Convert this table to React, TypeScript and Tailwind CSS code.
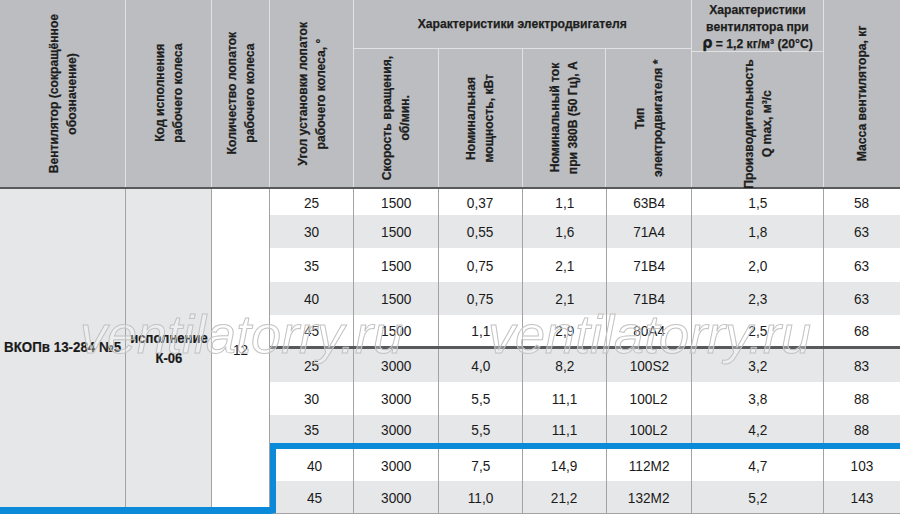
import React from "react";

const FONT = "font-['Liberation_Sans',Arial,sans-serif]";

type Row = (string | number)[];

const group1: Row[] = [
  [25, 1500, "0,37", "1,1", "63B4", "1,5", 58],
  [30, 1500, "0,55", "1,6", "71A4", "1,8", 63],
  [35, 1500, "0,75", "2,1", "71B4", "2,0", 63],
  [40, 1500, "0,75", "2,1", "71B4", "2,3", 63],
  [45, 1500, "1,1", "2,9", "80A4", "2,5", 68],
];
const group2: Row[] = [
  [25, 3000, "4,0", "8,2", "100S2", "3,2", 83],
  [30, 3000, "5,5", "11,1", "100L2", "3,8", 88],
  [35, 3000, "5,5", "11,1", "100L2", "4,2", 88],
];
const group3: Row[] = [
  [40, 3000, "7,5", "14,9", "112M2", "4,7", 103],
  [45, 3000, "11,0", "21,2", "132M2", "5,2", 143],
];

const WIDTHS = ["w-[84px]", "w-[85px]", "w-[84px]", "w-[84px]", "w-[85px]", "w-[132px]", "w-[76px]"];
const WIDTHS_HL = ["w-[78px]", "w-[85px]", "w-[84px]", "w-[84px]", "w-[85px]", "w-[132px]", "w-[76px]"];

function DataRow({ row, h, gray, hl }: { row: Row; h: string; gray: boolean; hl?: boolean }) {
  const widths = hl ? WIDTHS_HL : WIDTHS;
  return (
    <div className={`flex ${h} ${gray ? "bg-[#e6e7e8]" : "bg-white"}`}>
      {row.map((v, i) => (
        <div
          key={i}
          className={`${widths[i]} flex items-center justify-center pt-[1px] text-[15.5px] text-[#1a1a1a] ${
            i < row.length - 1 ? "border-r border-[#a3a3a3]" : ""
          }`}
        >
          <span className="inline-block whitespace-nowrap scale-x-[0.88]">{v}</span>
        </div>
      ))}
    </div>
  );
}

function VText({ children }: { children: React.ReactNode }) {
  return (
    <div className="[writing-mode:vertical-rl] rotate-180 scale-y-[0.9] text-center text-[13.5px] font-bold leading-[18px] text-[#1d1d1d] whitespace-nowrap [-webkit-text-stroke:0.25px_#1d1d1d]">
      {children}
    </div>
  );
}

function HCol({ w, children, last }: { w: string; children: React.ReactNode; last?: boolean }) {
  return (
    <div className={`${w} h-full flex items-center justify-center ${last ? "" : "border-r border-[#e2e2e2]"}`}>
      <VText>{children}</VText>
    </div>
  );
}

export default function App() {
  return (
    <div className={`relative w-[900px] h-[514px] overflow-hidden bg-white ${FONT}`}>
      {/* Header */}
      <div className="flex h-[189px] bg-[#bcbdc0] border-b-2 border-[#58595b]">
        <HCol w="w-[126px]">
          Вентилятор (сокращённое
          <br />
          обозначение)
        </HCol>
        <HCol w="w-[86px]">
          Код исполнения
          <br />
          рабочего колеса
        </HCol>
        <HCol w="w-[58px]">
          Количество лопаток
          <br />
          рабочего колеса
        </HCol>
        <HCol w="w-[84px]">
          Угол установки лопаток
          <br />
          рабочего колеса, °
        </HCol>
        <div className="w-[338px] h-full flex flex-col border-r border-[#e2e2e2]">
          <div className="h-[52px] flex items-center justify-center border-b border-[#e2e2e2] text-[13.5px] font-bold text-[#1d1d1d] [-webkit-text-stroke:0.25px_#1d1d1d]">
            <span className="inline-block whitespace-nowrap scale-x-[0.9]">Характеристики электродвигателя</span>
          </div>
          <div className="flex-1 flex">
            <HCol w="w-[85px]">
              Скорость вращения,
              <br />
              об/мин.
            </HCol>
            <HCol w="w-[84px]">
              Номинальная
              <br />
              мощность, кВт
            </HCol>
            <HCol w="w-[84px]">
              Номинальный ток
              <br />
              при 380В (50 Гц), А
            </HCol>
            <HCol w="w-[85px]" last>
              Тип
              <br />
              электродвигателя *
            </HCol>
          </div>
        </div>
        <div className="w-[132px] h-full flex flex-col border-r border-[#e2e2e2]">
          <div className="h-[52px] flex items-center justify-center border-b border-[#e2e2e2] text-[13.5px] font-bold leading-[17px] text-[#1d1d1d] [-webkit-text-stroke:0.25px_#1d1d1d]">
            <div className="flex flex-col items-center whitespace-nowrap scale-x-[0.9] pt-[1px]">
              <span>Характеристики</span>
              <span>вентилятора при</span>
              <span>
                <span className="font-['DejaVu_Sans',sans-serif] text-[16px] leading-[14px]">ρ</span> = 1,2 кг/м³ (20°C)
              </span>
            </div>
          </div>
          <div className="flex-1 flex items-center justify-center">
            <VText>
              Производительность
              <br />Q max, м³/с
            </VText>
          </div>
        </div>
        <HCol w="w-[76px]" last>
          Масса вентилятора, кг
        </HCol>
      </div>

      {/* Body */}
      <div className="flex h-[325px]">
        <div className="w-[270px] h-full flex border-b-[7px] border-[#0a8ad9]">
          <div className="w-[126px] h-full bg-[#e6e7e8] border-r border-[#a3a3a3] flex items-center justify-center text-[14.5px] font-bold text-[#1a1a1a] [-webkit-text-stroke:0.2px_#1a1a1a]">
            <span className="inline-block whitespace-nowrap scale-x-[0.92]">ВКОПв 13-284 №5</span>
          </div>
          <div className="w-[86px] h-full bg-[#e6e7e8] border-r border-[#a3a3a3] flex flex-col items-center justify-center text-[14.5px] font-bold leading-[20px] text-[#1a1a1a] [-webkit-text-stroke:0.2px_#1a1a1a]">
            <span className="inline-block whitespace-nowrap scale-x-[0.9]">исполнение</span>
            <span className="inline-block whitespace-nowrap scale-x-[0.9]">К-06</span>
          </div>
          <div className="w-[58px] h-full bg-white border-r border-[#a3a3a3] flex items-center justify-center text-[15.5px] text-[#1a1a1a]">
            <span className="inline-block scale-x-[0.88] pt-[4px]">12</span>
          </div>
        </div>
        <div className="w-[630px] h-full flex flex-col">
          <DataRow row={group1[0]} h="h-[26px]" gray={false} />
          <DataRow row={group1[1]} h="h-[33px]" gray />
          <DataRow row={group1[2]} h="h-[34px]" gray={false} />
          <DataRow row={group1[3]} h="h-[33px]" gray />
          <DataRow row={group1[4]} h="h-[31px]" gray={false} />
          <div className="h-[3px] bg-[#58595b]" />
          <DataRow row={group2[0]} h="h-[33px]" gray />
          <DataRow row={group2[1]} h="h-[33px]" gray={false} />
          <DataRow row={group2[2]} h="h-[28px]" gray />
          <div className="border-t-[6px] border-l-[6px] border-b border-t-[#0a8ad9] border-l-[#0a8ad9] border-b-[#a3a3a3]">
            <DataRow row={group3[0]} h="h-[32px]" gray={false} hl />
            <DataRow row={group3[1]} h="h-[32px]" gray hl />
          </div>
        </div>
      </div>

      {/* Watermark */}
      <div className="pointer-events-none absolute left-[80px] top-[307px] italic text-[54px] leading-none text-white/30 [-webkit-text-stroke:1px_#c2c2c2]">
        ventilatorry.ru
      </div>
      <div className="pointer-events-none absolute left-[488px] top-[307px] italic text-[54px] leading-none text-white/30 [-webkit-text-stroke:1px_#c2c2c2]">
        ventilatorry.ru
      </div>
    </div>
  );
}
